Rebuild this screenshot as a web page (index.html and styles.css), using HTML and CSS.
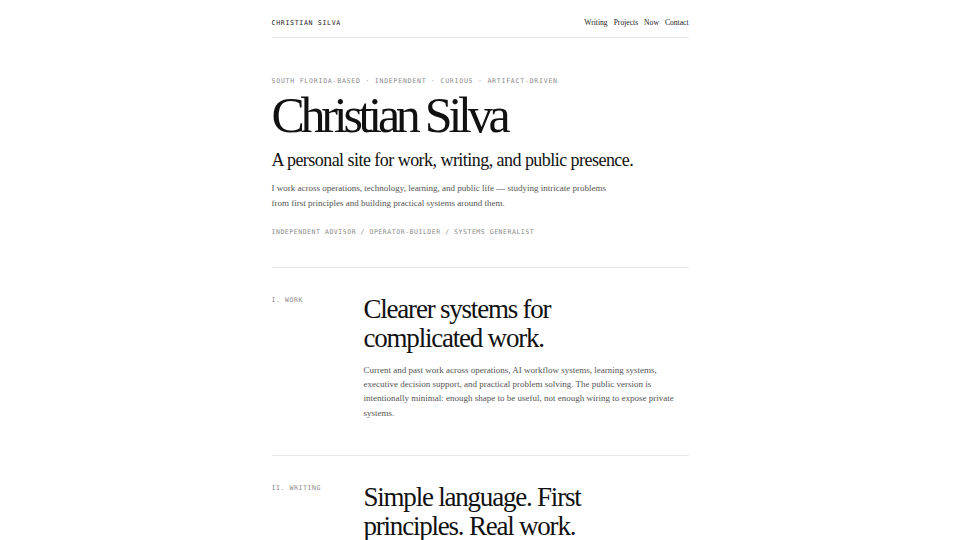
FILE: index.html
```html
<!DOCTYPE html>
<html lang="en">
<head>
<meta charset="utf-8">
<title>Christian Silva</title>
<link rel="stylesheet" href="styles.css">
</head>
<body>
<div class="page">
  <header class="site-header">
    <div class="brand">CHRISTIAN SILVA</div>
    <nav class="nav">
      <a href="#">Writing</a>
      <a href="#">Projects</a>
      <a href="#">Now</a>
      <a href="#">Contact</a>
    </nav>
  </header>

  <section class="hero">
    <p class="eyebrow">SOUTH FLORIDA-BASED · INDEPENDENT · CURIOUS · ARTIFACT-DRIVEN</p>
    <h1 class="title">Christian Silva</h1>
    <p class="subtitle">A personal site for work, writing, and public presence.</p>
    <p class="intro">I work across operations, technology, learning, and public life — studying intricate problems from first principles and building practical systems around them.</p>
    <p class="roles">INDEPENDENT ADVISOR / OPERATOR-BUILDER / SYSTEMS GENERALIST</p>
  </section>

  <section class="block">
    <div class="label">I. WORK</div>
    <div class="content">
      <h2 class="heading">Clearer systems for complicated work.</h2>
      <p class="body">Current and past work across operations, AI workflow systems, learning systems, executive decision support, and practical problem solving. The public version is intentionally minimal: enough shape to be useful, not enough wiring to expose private systems.</p>
    </div>
  </section>

  <section class="block">
    <div class="label">II. WRITING</div>
    <div class="content">
      <h2 class="heading">Simple language. First principles. Real work.</h2>
    </div>
  </section>
</div>
</body>
</html>
```

FILE: styles.css
```css
* { box-sizing: border-box; }
html, body { margin: 0; padding: 0; background: #fff; }
body {
  font-family: "Liberation Serif", "Times New Roman", serif;
  color: #111;
}
.page {
  width: 417px;
  margin: 0 auto;
}
.site-header {
  display: flex;
  justify-content: space-between;
  align-items: center;
  padding: 18px 0 10px;
  border-bottom: 1px solid #e6e6e6;
}
.brand {
  font-family: "DejaVu Sans Mono", "Liberation Mono", monospace;
  font-size: 6.6px;
  letter-spacing: 0.1em;
  color: #222;
}
.nav {
  display: flex;
  gap: 6px;
}
.nav a {
  font-size: 7.6px;
  color: #222;
  text-decoration: none;
}
.hero {
  padding: 39px 0 31px;
  border-bottom: 1px solid #e6e6e6;
}
.eyebrow, .roles, .label {
  font-family: "DejaVu Sans Mono", "Liberation Mono", monospace;
  font-size: 6.5px;
  letter-spacing: 0.12em;
  color: #8a8a8a;
  margin: 0;
}
.title {
  font-weight: normal;
  font-size: 50px;
  letter-spacing: -0.085em;
  line-height: 1;
  margin: 5px 0 0;
}
.subtitle {
  font-size: 18px;
  letter-spacing: -0.03em;
  margin: 10px 0 0;
  line-height: 1.2;
}
.intro {
  font-size: 9px;
  line-height: 15px;
  color: #555;
  margin: 9px 0 0;
  max-width: 345px;
}
.roles {
  margin-top: 17px;
  letter-spacing: 0.083em;
}
.block {
  display: grid;
  grid-template-columns: 92px 1fr;
  padding: 26px 0 35px;
  border-bottom: 1px solid #e6e6e6;
}
.label {
  padding-top: 2px;
  letter-spacing: 0.09em;
}
.heading {
  font-weight: normal;
  font-size: 27px;
  line-height: 29px;
  letter-spacing: -0.045em;
  margin: 1px 0 0;
  max-width: 240px;
}
.body {
  font-size: 9px;
  line-height: 14.4px;
  color: #555;
  margin: 10px 0 0;
  max-width: 314px;
}
```
